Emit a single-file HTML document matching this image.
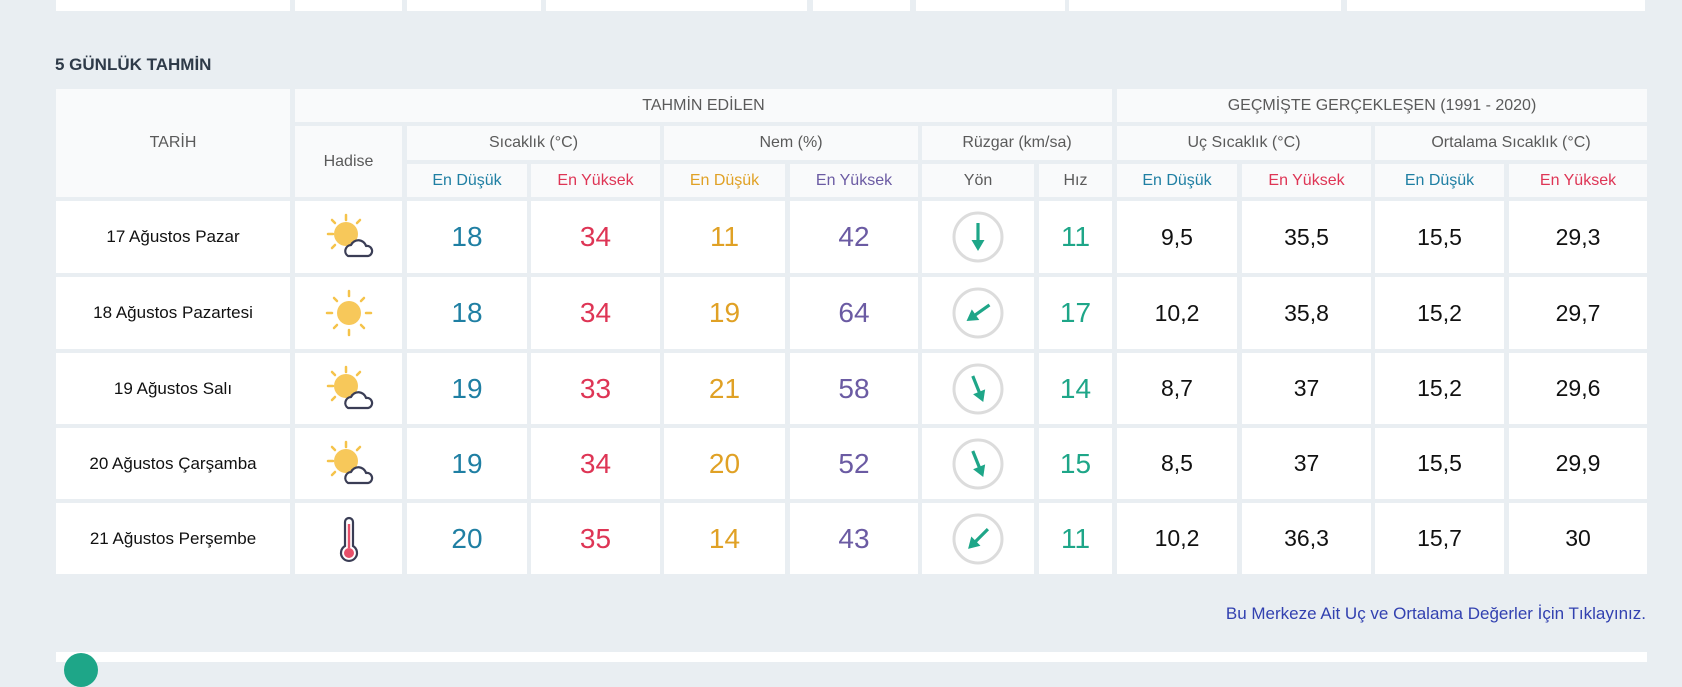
<!DOCTYPE html>
<html><head><meta charset="utf-8"><style>
*{margin:0;padding:0;box-sizing:border-box}
body{width:1682px;height:656px;background:#e9eef2;position:relative;overflow:hidden;font-family:"Liberation Sans",sans-serif}
.c{position:absolute;display:flex;align-items:center;justify-content:center;text-align:center}
.h{background:#f9fafb;color:#5a5a5a;font-size:16px}
.d{background:#fff}
.w{background:#fff}
.n{font-size:28px}
.t{font-size:17px;color:#111}
.v{font-size:23px;color:#111}
.b{color:#1f7fa3}.r{color:#de3555}.o{color:#e0a125}.p{color:#6b5ba3}.g{color:#1ea688}
</style></head><body>
<div class="c w" style="left:56px;top:0;width:234px;height:11px"></div>
<div class="c w" style="left:295px;top:0;width:107px;height:11px"></div>
<div class="c w" style="left:407px;top:0;width:134px;height:11px"></div>
<div class="c w" style="left:546px;top:0;width:261px;height:11px"></div>
<div class="c w" style="left:813px;top:0;width:97px;height:11px"></div>
<div class="c w" style="left:916px;top:0;width:149px;height:11px"></div>
<div class="c w" style="left:1069px;top:0;width:272px;height:11px"></div>
<div class="c w" style="left:1347px;top:0;width:298px;height:11px"></div>

<div style="position:absolute;left:55px;top:55px;font-size:17px;font-weight:bold;color:#2e3a48">5 GÜNLÜK TAHMİN</div>

<div class="c h" style="left:56px;top:89px;width:234px;height:108px">TARİH</div>
<div class="c h" style="left:295px;top:89px;width:817px;height:33px">TAHMİN EDİLEN</div>
<div class="c h" style="left:1117px;top:89px;width:530px;height:33px">GEÇMİŞTE GERÇEKLEŞEN (1991 - 2020)</div>
<div class="c h" style="left:295px;top:126px;width:107px;height:71px">Hadise</div>
<div class="c h" style="left:407px;top:126px;width:253px;height:34px">Sıcaklık (°C)</div>
<div class="c h" style="left:664px;top:126px;width:254px;height:34px">Nem (%)</div>
<div class="c h" style="left:922px;top:126px;width:190px;height:34px">Rüzgar (km/sa)</div>
<div class="c h" style="left:1117px;top:126px;width:254px;height:34px">Uç Sıcaklık (°C)</div>
<div class="c h" style="left:1375px;top:126px;width:272px;height:34px">Ortalama Sıcaklık (°C)</div>
<div class="c h b" style="left:407px;top:164px;width:120px;height:33px">En Düşük</div>
<div class="c h r" style="left:531px;top:164px;width:129px;height:33px">En Yüksek</div>
<div class="c h o" style="left:664px;top:164px;width:121px;height:33px">En Düşük</div>
<div class="c h p" style="left:790px;top:164px;width:128px;height:33px">En Yüksek</div>
<div class="c h" style="left:922px;top:164px;width:112px;height:33px">Yön</div>
<div class="c h" style="left:1039px;top:164px;width:73px;height:33px">Hız</div>
<div class="c h b" style="left:1117px;top:164px;width:120px;height:33px">En Düşük</div>
<div class="c h r" style="left:1242px;top:164px;width:129px;height:33px">En Yüksek</div>
<div class="c h b" style="left:1375px;top:164px;width:129px;height:33px">En Düşük</div>
<div class="c h r" style="left:1509px;top:164px;width:138px;height:33px">En Yüksek</div>

<svg width="0" height="0" style="position:absolute"><defs>
<g id="sun"><g stroke="#f5c34a" stroke-width="2.5" stroke-linecap="round"><line x1="25" y1="3" x2="25" y2="8"/><line x1="25" y1="42" x2="25" y2="47"/><line x1="3" y1="25" x2="8" y2="25"/><line x1="42" y1="25" x2="47" y2="25"/><line x1="10" y1="10" x2="13" y2="13"/><line x1="40" y1="10" x2="37" y2="13"/><line x1="10" y1="40" x2="13" y2="37"/><line x1="40" y1="40" x2="37" y2="37"/></g><circle cx="25" cy="25" r="12" fill="#f7c85a"/></g>
<g id="sc"><g stroke="#f5c34a" stroke-width="2.5" stroke-linecap="round"><line x1="22" y1="3" x2="22" y2="8"/><line x1="4" y1="22" x2="9" y2="22"/><line x1="8" y1="8" x2="11" y2="11"/><line x1="36" y1="8" x2="33" y2="11"/><line x1="8" y1="36" x2="11" y2="33"/></g><circle cx="22" cy="22" r="12" fill="#f7c85a"/><path d="M24 44 a6 6 0 0 1 3-11 a8 8 0 0 1 15 1 a5 5 0 0 1 2 10 z" fill="#fff" stroke="#3a3d55" stroke-width="2.2" stroke-linejoin="round"/></g>
<g id="th"><path d="M21 8 a4 4 0 0 1 8 0 v24 a8 8 0 1 1 -8 0 z" fill="#fff" stroke="#3a3d55" stroke-width="2.2"/><rect x="23.8" y="10" width="2.4" height="24" fill="#e8506a"/><circle cx="25" cy="39" r="5" fill="#e8506a"/></g>
<circle id="ring" cx="28" cy="28" r="24" fill="none" stroke="#dcdcdc" stroke-width="3"/>
<g id="arr"><line x1="28" y1="14" x2="28" y2="35" stroke="#1ea688" stroke-width="3.2"/><path d="M21.5 31 L28 42 L34.5 31 z" fill="#1ea688"/></g>
</defs></svg>

<div class="c d t" style="left:56px;top:201px;width:234px;height:72px">17 Ağustos Pazar</div>
<div class="c d" style="left:295px;top:201px;width:107px;height:72px"><svg width="50" height="50"><use href="#sc"/></svg></div>
<div class="c d n b" style="left:407px;top:201px;width:120px;height:72px">18</div>
<div class="c d n r" style="left:531px;top:201px;width:129px;height:72px">34</div>
<div class="c d n o" style="left:664px;top:201px;width:121px;height:72px">11</div>
<div class="c d n p" style="left:790px;top:201px;width:128px;height:72px">42</div>
<div class="c d" style="left:922px;top:201px;width:112px;height:72px"><svg width="56" height="56"><use href="#ring"/><use href="#arr"/></svg></div>
<div class="c d n g" style="left:1039px;top:201px;width:73px;height:72px">11</div>
<div class="c d v" style="left:1117px;top:201px;width:120px;height:72px">9,5</div>
<div class="c d v" style="left:1242px;top:201px;width:129px;height:72px">35,5</div>
<div class="c d v" style="left:1375px;top:201px;width:129px;height:72px">15,5</div>
<div class="c d v" style="left:1509px;top:201px;width:138px;height:72px">29,3</div>

<div class="c d t" style="left:56px;top:277px;width:234px;height:72px">18 Ağustos Pazartesi</div>
<div class="c d" style="left:295px;top:277px;width:107px;height:72px"><svg width="50" height="50"><use href="#sun"/></svg></div>
<div class="c d n b" style="left:407px;top:277px;width:120px;height:72px">18</div>
<div class="c d n r" style="left:531px;top:277px;width:129px;height:72px">34</div>
<div class="c d n o" style="left:664px;top:277px;width:121px;height:72px">19</div>
<div class="c d n p" style="left:790px;top:277px;width:128px;height:72px">64</div>
<div class="c d" style="left:922px;top:277px;width:112px;height:72px"><svg width="56" height="56"><use href="#ring"/><use href="#arr" transform="rotate(55 28 28)"/></svg></div>
<div class="c d n g" style="left:1039px;top:277px;width:73px;height:72px">17</div>
<div class="c d v" style="left:1117px;top:277px;width:120px;height:72px">10,2</div>
<div class="c d v" style="left:1242px;top:277px;width:129px;height:72px">35,8</div>
<div class="c d v" style="left:1375px;top:277px;width:129px;height:72px">15,2</div>
<div class="c d v" style="left:1509px;top:277px;width:138px;height:72px">29,7</div>

<div class="c d t" style="left:56px;top:353px;width:234px;height:71px">19 Ağustos Salı</div>
<div class="c d" style="left:295px;top:353px;width:107px;height:71px"><svg width="50" height="50"><use href="#sc"/></svg></div>
<div class="c d n b" style="left:407px;top:353px;width:120px;height:71px">19</div>
<div class="c d n r" style="left:531px;top:353px;width:129px;height:71px">33</div>
<div class="c d n o" style="left:664px;top:353px;width:121px;height:71px">21</div>
<div class="c d n p" style="left:790px;top:353px;width:128px;height:71px">58</div>
<div class="c d" style="left:922px;top:353px;width:112px;height:71px"><svg width="56" height="56"><use href="#ring"/><use href="#arr" transform="rotate(-22 28 28)"/></svg></div>
<div class="c d n g" style="left:1039px;top:353px;width:73px;height:71px">14</div>
<div class="c d v" style="left:1117px;top:353px;width:120px;height:71px">8,7</div>
<div class="c d v" style="left:1242px;top:353px;width:129px;height:71px">37</div>
<div class="c d v" style="left:1375px;top:353px;width:129px;height:71px">15,2</div>
<div class="c d v" style="left:1509px;top:353px;width:138px;height:71px">29,6</div>

<div class="c d t" style="left:56px;top:428px;width:234px;height:71px">20 Ağustos Çarşamba</div>
<div class="c d" style="left:295px;top:428px;width:107px;height:71px"><svg width="50" height="50"><use href="#sc"/></svg></div>
<div class="c d n b" style="left:407px;top:428px;width:120px;height:71px">19</div>
<div class="c d n r" style="left:531px;top:428px;width:129px;height:71px">34</div>
<div class="c d n o" style="left:664px;top:428px;width:121px;height:71px">20</div>
<div class="c d n p" style="left:790px;top:428px;width:128px;height:71px">52</div>
<div class="c d" style="left:922px;top:428px;width:112px;height:71px"><svg width="56" height="56"><use href="#ring"/><use href="#arr" transform="rotate(-22 28 28)"/></svg></div>
<div class="c d n g" style="left:1039px;top:428px;width:73px;height:71px">15</div>
<div class="c d v" style="left:1117px;top:428px;width:120px;height:71px">8,5</div>
<div class="c d v" style="left:1242px;top:428px;width:129px;height:71px">37</div>
<div class="c d v" style="left:1375px;top:428px;width:129px;height:71px">15,5</div>
<div class="c d v" style="left:1509px;top:428px;width:138px;height:71px">29,9</div>

<div class="c d t" style="left:56px;top:503px;width:234px;height:71px">21 Ağustos Perşembe</div>
<div class="c d" style="left:295px;top:503px;width:107px;height:71px"><svg width="50" height="50"><use href="#th"/></svg></div>
<div class="c d n b" style="left:407px;top:503px;width:120px;height:71px">20</div>
<div class="c d n r" style="left:531px;top:503px;width:129px;height:71px">35</div>
<div class="c d n o" style="left:664px;top:503px;width:121px;height:71px">14</div>
<div class="c d n p" style="left:790px;top:503px;width:128px;height:71px">43</div>
<div class="c d" style="left:922px;top:503px;width:112px;height:71px"><svg width="56" height="56"><use href="#ring"/><use href="#arr" transform="rotate(45 28 28)"/></svg></div>
<div class="c d n g" style="left:1039px;top:503px;width:73px;height:71px">11</div>
<div class="c d v" style="left:1117px;top:503px;width:120px;height:71px">10,2</div>
<div class="c d v" style="left:1242px;top:503px;width:129px;height:71px">36,3</div>
<div class="c d v" style="left:1375px;top:503px;width:129px;height:71px">15,7</div>
<div class="c d v" style="left:1509px;top:503px;width:138px;height:71px">30</div>

<div style="position:absolute;right:36px;top:604px;font-size:17px;color:#3241b0">Bu Merkeze Ait Uç ve Ortalama Değerler İçin Tıklayınız.</div>
<div style="position:absolute;left:56px;top:652px;width:1591px;height:10px;background:#fff"></div>
<div style="position:absolute;left:64px;top:653px;width:34px;height:34px;border-radius:50%;background:#1ea688"></div>
</body></html>
